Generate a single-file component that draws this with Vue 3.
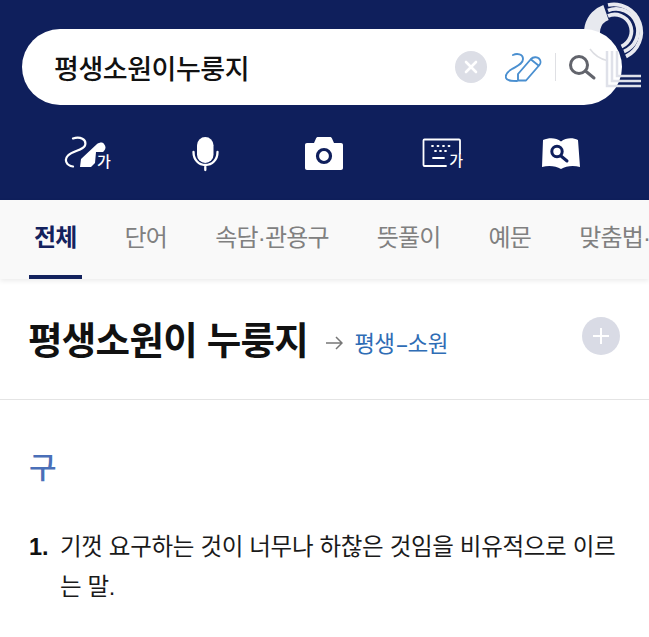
<script setup>
const tabs = [
  { label: '전체', active: true },
  { label: '단어' },
  { label: '속담·관용구' },
  { label: '뜻풀이' },
  { label: '예문' },
  { label: '맞춤법·' }
]
</script>

<template>
  <div class="page">
    <header class="head">
      <div class="searchbar">
        <span class="query">평생소원이누룽지</span>
        <span class="clear">
          <svg width="14" height="14" viewBox="0 0 14 14"><path d="M2 2l10 10M12 2L2 12" stroke="#fff" stroke-width="2.6" stroke-linecap="round"/></svg>
        </span>
        <svg class="pen" width="38" height="34" viewBox="505 50 38 34" fill="none" stroke="#4a8fd0" stroke-width="1.9" stroke-linecap="round" stroke-linejoin="round">
          <path d="M513 55c4-2 10-1 10 4 0 5-6 7-11 10-5 3-7 6-6 9 1 3 5 3 11 3"/>
          <path d="M518 80.500v-6.500l13-15c2-2 6-2.500 8-0.500 2 2 2 5 0 7l-13 15z"/>
          <path d="M531 59.500l7.500 6"/>
        </svg>
        <span class="vline"></span>
        <svg class="mag" width="30" height="30" viewBox="567 52 30 30" fill="none" stroke="#62646c" stroke-width="3" stroke-linecap="round"><circle cx="579" cy="65" r="8.500"/><path d="M585.500 71l8.500 7"/></svg>
      </div>
      <div class="tools">
        <span class="tool">
          <svg width="46" height="36" viewBox="63 136 46 36">
            <path d="M73 138.500c7-2.500 14 1 12 7-2 5-12 5-17 10-4 4-2 10 5 11" fill="none" stroke="#fff" stroke-width="2.200" stroke-linecap="round"/>
            <path d="M80 167l1-8 16-15c3-2 6-2 7 0 2 2 2 5 0 7l-1 1h-7l-1 11-4 4z" fill="#fff"/>
          </svg>
          <span class="ga">가</span>
        </span>
        <span class="tool">
          <svg width="30" height="36" viewBox="190 136 30 36" fill="none">
            <rect x="197" y="137" width="16.500" height="26" rx="8.250" fill="#fff"/>
            <path d="M193.500 152c0 8 5.500 13 11.800 13 6.700 0 12.200-5 12.200-13M205.300 165v5" stroke="#fff" stroke-width="2.300" stroke-linecap="round"/>
          </svg>
        </span>
        <span class="tool">
          <svg width="40" height="36" viewBox="304 134 40 36">
            <path fill="#fff" d="M307 141h7l2-4.500c.4-1 1-1.500 2-1.500h12c1 0 1.600.5 2 1.500l2 4.500h7c1.200 0 2 .8 2 2v23c0 1.200-.8 2-2 2h-34c-1.200 0-2-.8-2-2v-23c0-1.200.8-2 2-2z"/>
            <circle cx="324" cy="154" r="6.500" fill="none" stroke="#0f1f5c" stroke-width="3.200"/>
          </svg>
        </span>
        <span class="tool">
          <svg width="46" height="36" viewBox="420 136 46 36" fill="none" stroke="#fff" stroke-width="1.800" stroke-linecap="round">
            <path d="M447 166h-21.500a1 1 0 01-1-1v-24.500a1 1 0 011-1h34.500a1 1 0 011 1v13"/>
            <path d="M433 146h1M438.500 146h1M444 146h1M449.500 146h1M436 151h1M441 151h1M446 151h1M434 158h11"/>
          </svg>
          <span class="ga ga2">가</span>
        </span>
        <span class="tool">
          <svg width="40" height="36" viewBox="541 135 40 36">
            <path fill="#fff" d="M543 139c6-2.500 13-2.500 18 1.500 5-4 12-4 17-1.500l2 27c-7-2-14-1-19 2-5-3-12-4-19-2z"/>
            <circle cx="557" cy="150.500" r="5.200" fill="none" stroke="#0f1f5c" stroke-width="3"/>
            <path d="M561 155l6 5" stroke="#0f1f5c" stroke-width="3" stroke-linecap="round"/>
          </svg>
        </span>
      </div>
      <svg class="mark" width="74" height="95" viewBox="575 0 74 95" fill="none">
        <path d="M606 12.500A21 21 0 0 0 598 47" stroke="#fff" stroke-opacity=".9" stroke-width="16"/>
        <path d="M590 49A29 29 0 0 0 607 60.500" stroke="#dcdde2" stroke-width="1.500"/>
        <g stroke="#e8e9f0" stroke-width="3.800">
          <path d="M608 5A27.500 27.500 0 0 1 626 56.500"/>
          <path d="M608 10.500A22 22 0 0 1 624 51.500"/>
          <path d="M608 16A16.500 16.500 0 0 1 621.500 46.500"/>
        </g>
        <g stroke="#dfe1e9" stroke-width="2.500">
          <path d="M607 51V86H641"/>
          <path d="M612 51V81H641"/>
          <path d="M617 51V76H641"/>
        </g>
      </svg>
    </header>

    <nav class="tabs">
      <span v-for="t in tabs" :key="t.label" class="tab" :class="{ active: t.active }">{{ t.label }}</span>
    </nav>

    <section class="title">
      <h1>평생소원이 누룽지</h1>
      <svg class="arrow" width="18" height="14" viewBox="0 0 18 14" fill="none" stroke="#777" stroke-width="1.500"><path d="M1 7h16M11 1l6 6-6 6"/></svg>
      <a class="link">평생<span class="hy">-</span>소원</a>
      <span class="plus">
        <svg width="20" height="20" viewBox="0 0 20 20"><path d="M10 2v16M2 10h16" stroke="#fff" stroke-width="2"/></svg>
      </span>
    </section>

    <section class="body">
      <div class="kind">구</div>
      <div class="def">
        <span class="num">1.</span>
        <p>기껏 요구하는 것이 너무나 하찮은 것임을 비유적으로 이르는 말.</p>
      </div>
    </section>
  </div>
</template>

<style>
html, body { margin: 0; background: #fff; }
</style>

<style scoped>
.page {
  position: relative;
  width: 649px;
  height: 637px;
  overflow: hidden;
  background: #fff;
  font-family: "Liberation Sans", "Noto Sans CJK KR", sans-serif;
  color: #111;
}
.head {
  position: relative;
  height: 200px;
  box-sizing: border-box;
  padding: 29px 27px 0 22px;
  background: #0f1f5c;
}
.searchbar {
  display: flex;
  align-items: center;
  height: 76px;
  border-radius: 38px;
  background: #fff;
  padding: 0 25px 0 32px;
}
.query { flex: 1; font-size: 27px; font-weight: 500; letter-spacing: -0.45px; color: #111; }
.clear {
  display: flex; align-items: center; justify-content: center;
  width: 32px; height: 32px; border-radius: 50%; background: #dcdee6;
  margin-right: 18px;
}
.pen { margin-right: 12px; }
.vline { width: 1px; height: 28px; background: #dfe0e4; margin-right: 11px; }
.tools {
  display: flex;
  justify-content: space-between;
  align-items: center;
  padding: 0 31px 0 34px;
  margin-top: 29px;
  height: 40px;
}
.tool { position: relative; display: flex; width: 60px; justify-content: center; }
.ga { position: absolute; left: 41px; bottom: 2px; font-size: 15px; font-weight: 500; line-height: 16px; color: #fff; }
.ga2 { left: 37px; bottom: 3px; }
.mark { position: absolute; right: 0; top: 0; }
.tabs {
  display: flex;
  height: 79px;
  padding-left: 34px;
  gap: 48px;
  background: #f9f9f9;
  box-shadow: 0 2px 5px rgba(0,0,0,.08);
  white-space: nowrap;
  overflow: hidden;
  position: relative;
}
.tab {
  position: relative;
  line-height: 76px;
  font-size: 24px;
  letter-spacing: -0.8px;
  color: #808080;
  height: 79px;
}
.tab.active { color: #13225e; font-weight: 700; }
.tab.active::after {
  content: "";
  position: absolute;
  left: -5px; right: -5px; bottom: 0;
  height: 4px;
  background: #13225e;
}
.title {
  display: flex;
  align-items: center;
  height: 121px;
  padding: 0 29px 0 28px;
  border-bottom: 1px solid #e4e4e4;
  box-sizing: border-box;
}
h1 { margin: 0 0 4px; font-size: 37.500px; font-weight: 700; letter-spacing: -0.7px; color: #111; }
.arrow { margin: 8px 0 0 17px; }
.link { font-size: 22.500px; color: #2f6db5; margin: 6px 0 0 11px; letter-spacing: -0.5px; }
.hy { display: inline-block; margin: 0 3px; transform: scaleX(1.8); }
.plus {
  display: flex; align-items: center; justify-content: center;
  width: 38px; height: 38px; border-radius: 50%; background: #d9dbe5;
  margin: 0 0 6px auto;
}
.body { padding: 0 29px; }
.kind { margin-top: 44px; font-size: 30px; font-weight: 500; line-height: 48px; color: #4a6fb8; }
.def { display: flex; margin-top: 35px; font-size: 23.500px; line-height: 40px; }
.num { width: 31px; flex: none; font-weight: 700; }
.def p { margin: 0; width: 560px; letter-spacing: -0.3px; color: #1a1a1a; }
</style>
